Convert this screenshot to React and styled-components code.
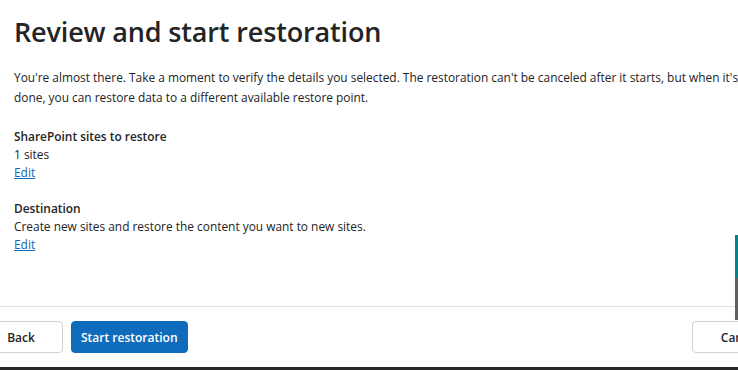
import React from 'react'
import styled, { createGlobalStyle } from 'styled-components'

const GlobalStyle = createGlobalStyle`
  body {
    margin: 0;
    background: #ffffff;
    font-family: "Open Sans", "Noto Sans", "Liberation Sans", sans-serif;
    color: #242424;
  }
`

const Page = styled.div`
  position: relative;
  width: 738px;
  height: 370px;
  overflow: hidden;
  display: flex;
  flex-direction: column;
  background: #ffffff;
`

const Content = styled.div`
  flex: 1;
  padding: 0 0 0 14px;
`

const Title = styled.h1`
  margin: 14px 0 0;
  font-size: 27px;
  line-height: 36px;
  font-weight: 600;
  letter-spacing: -0.15px;
  white-space: nowrap;
`

const Intro = styled.p`
  margin: 17px 0 0;
  font-size: 11.9px;
  line-height: 20px;
  white-space: nowrap;
`

const Section = styled.div`
  margin-top: ${props => props.first ? '20px' : '18px'};
  font-size: 11.9px;
  line-height: 18px;
`

const Label = styled.div`
  font-weight: 600;
`

const Value = styled.div``

const EditLink = styled.a`
  color: #0f6cbd;
  text-decoration: underline;
  cursor: pointer;
`

const Footer = styled.div`
  display: flex;
  align-items: center;
  justify-content: space-between;
  width: 809px;
  margin-left: -21px;
  padding: 14px 0;
  box-sizing: border-box;
  border-top: 1px solid #e0e0e0;
`

const ButtonGroup = styled.div`
  display: flex;
  gap: 8px;
`

const Button = styled.button`
  height: 32px;
  min-width: ${props => props.wide ? '96px' : '84px'};
  padding: 0 9px;
  box-sizing: border-box;
  border-radius: 4px;
  font-family: inherit;
  font-size: 12px;
  font-weight: 600;
  cursor: pointer;
  border: 1px solid ${props => props.primary ? '#0f6cbd' : '#d1d1d1'};
  background: ${props => props.primary ? '#0f6cbd' : '#ffffff'};
  color: ${props => props.primary ? '#ffffff' : '#242424'};
`

const BottomBar = styled.div`
  height: 3px;
  background: #292929;
`

const ScrollThumb = styled.div`
  position: absolute;
  right: 0;
  top: 235px;
  width: 3px;
  display: flex;
  flex-direction: column;
`

const ThumbPart = styled.div`
  height: ${props => props.h}px;
  background: ${props => props.color};
`

export default function App() {
  return (
    <Page>
      <GlobalStyle />
      <Content>
        <Title>Review and start restoration</Title>
        <Intro>
          You're almost there. Take a moment to verify the details you selected. The restoration can't be canceled after it starts, but when it's
          <br />
          done, you can restore data to a different available restore point.
        </Intro>
        <Section first>
          <Label>SharePoint sites to restore</Label>
          <Value>1 sites</Value>
          <EditLink>Edit</EditLink>
        </Section>
        <Section>
          <Label>Destination</Label>
          <Value>Create new sites and restore the content you want to new sites.</Value>
          <EditLink>Edit</EditLink>
        </Section>
      </Content>
      <Footer>
        <ButtonGroup>
          <Button>Back</Button>
          <Button primary>Start restoration</Button>
        </ButtonGroup>
        <Button wide>Cancel</Button>
      </Footer>
      <BottomBar />
      <ScrollThumb>
        <ThumbPart h={43} color="#038387" />
        <ThumbPart h={42} color="#616161" />
      </ScrollThumb>
    </Page>
  )
}
